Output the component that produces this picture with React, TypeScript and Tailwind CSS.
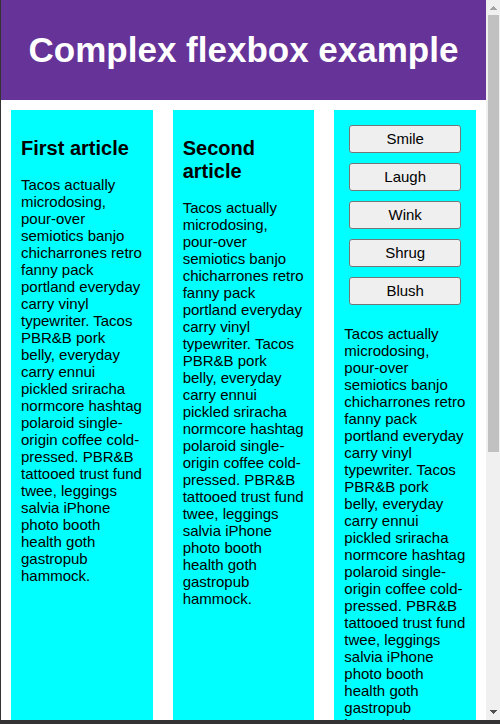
const articleText =
  'Tacos actually microdosing, pour-over semiotics banjo chicharrones retro fanny pack portland everyday carry vinyl typewriter. Tacos PBR&B pork belly, everyday carry ennui pickled sriracha normcore hashtag polaroid single-origin coffee cold-pressed. PBR&B tattooed trust fund twee, leggings salvia iPhone photo booth health goth gastropub hammock.';

const moods = ['Smile', 'Laugh', 'Wink', 'Shrug', 'Blush'];

function Article({ title }: { title: string }) {
  return (
    <article className="min-w-0 flex-1 bg-[#00ffff] p-[10px]">
      <h2 className="mt-[17px] mb-4 text-[20px] leading-[23px] font-bold">{title}</h2>
      <p>{articleText}</p>
    </article>
  );
}

function MoodArticle() {
  return (
    <article className="min-w-0 flex-1 bg-[#00ffff] p-[10px]">
      <div className="flex flex-col gap-[10px] p-[5px]">
        {moods.map((mood) => (
          <button
            key={mood}
            type="button"
            className="h-7 rounded-[3px] border border-[#767676] bg-[#efefef] pb-0.5 text-center leading-[17px]"
          >
            {mood}
          </button>
        ))}
      </div>
      <p className="mt-[15px]">{articleText}</p>
    </article>
  );
}

function ScrollTrack() {
  return (
    <div
      aria-hidden="true"
      className="flex w-[14px] shrink-0 flex-col items-end bg-[#f0f0f0] pr-px"
    >
      <svg
        className="h-[15px] w-[13px] shrink-0"
        viewBox="0 0 13 15"
        shapeRendering="crispEdges"
        fill="#a3a3a3"
      >
        <path d="M7 6h1v1h1v1h1v1h1v1H4V9h1V8h1V7h1z" />
      </svg>
      <div className="h-[437px] w-[11px] bg-[#c1c1c1]" />
      <svg
        className="mt-auto h-[15px] w-[13px] shrink-0"
        viewBox="0 0 13 15"
        shapeRendering="crispEdges"
        fill="#505050"
      >
        <path d="M4 5h7v1h-1v1H9v1H8v1H7V8H6V7H5V6H4z" />
      </svg>
    </div>
  );
}

export default function App() {
  return (
    <div className="flex h-screen border-b-4 border-l border-b-[#353233] border-l-[#353233] bg-white font-['Liberation_Sans',Arial,sans-serif] text-[15px] leading-[17px] text-black">
      <div className="min-w-0 flex-1 overflow-y-auto [scrollbar-width:none]">
        <header className="flex h-[100px] items-center justify-center bg-[#663399]">
          <h1 className="text-center text-[35px] leading-10 font-bold text-white">
            Complex flexbox example
          </h1>
        </header>
        <main className="flex gap-5 p-[10px]">
          <Article title="First article" />
          <Article title="Second article" />
          <MoodArticle />
        </main>
      </div>
      <ScrollTrack />
    </div>
  );
}
